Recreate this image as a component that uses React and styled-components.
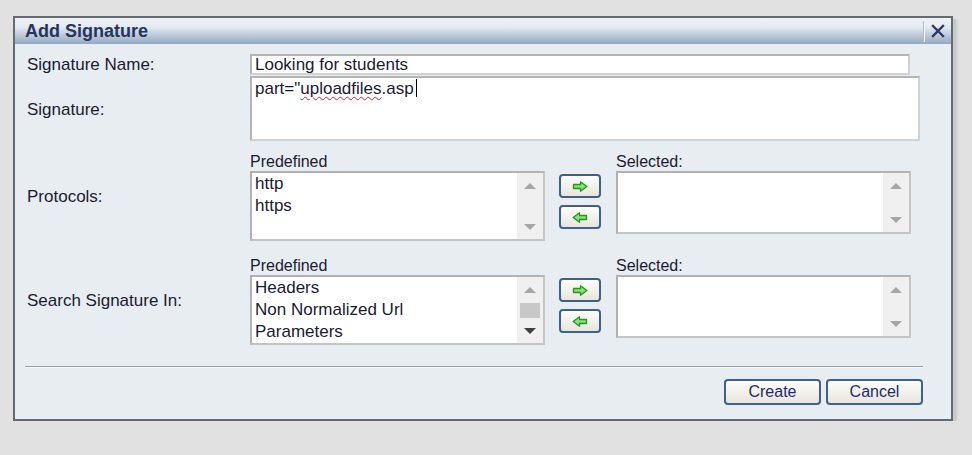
import React from 'react'
import styled, { createGlobalStyle } from 'styled-components';

const Global = createGlobalStyle`
  body {
    margin: 0;
    background: #e1e1e1;
    font-family: "Liberation Sans", Arial, sans-serif;
  }
`;

function ArrowIcon({ dir }) {
  const flip = dir === 'left' ? 'scale(-1,1) translate(-16,0)' : undefined;
  return (
    <svg width="16" height="11" viewBox="0 0 16 11">
      <g transform={flip}>
        <path d="M1.5 3.5 H8.5 V0.8 L14.8 5.5 L8.5 10.2 V7.5 H1.5 Z"
          fill="#8fdc7a" stroke="#1f9a1f" strokeWidth="1.3" strokeLinejoin="round" />
      </g>
    </svg>
  );
}

function CloseIcon() {
  return (
    <svg width="14" height="14" viewBox="0 0 14 14">
      <path d="M2 2 L12 12 M12 2 L2 12" stroke="#2e3a66" strokeWidth="2.4" strokeLinecap="square" />
    </svg>
  );
}

function ListBox({ items, height, thumb, activeDown }) {
  return (
    <List $h={height}>
      <Items>
        {items.map((it) => <Item key={it}>{it}</Item>)}
      </Items>
      <Scroll>
        <Tri $up />
        {thumb && <Thumb />}
        <Tri $active={activeDown} />
      </Scroll>
    </List>
  );
}

function Picker({ items, thumb }) {
  return (
    <PickRow>
      <PickCol>
        <SmallLabel>Predefined</SmallLabel>
        <ListBox items={items} height={70} thumb={thumb} activeDown={thumb} />
      </PickCol>
      <Moves>
        <MoveBtn><ArrowIcon dir="right" /></MoveBtn>
        <MoveBtn><ArrowIcon dir="left" /></MoveBtn>
      </Moves>
      <PickCol>
        <SmallLabel>Selected:</SmallLabel>
        <ListBox items={[]} height={63} />
      </PickCol>
    </PickRow>
  );
}

export default function App() {
  return (
    <>
      <Global />
      <Dialog>
        <TitleBar>
          <Title>Add Signature</Title>
          <Close><CloseIcon /></Close>
        </TitleBar>
        <Body>
          <Form>
            <Label>Signature Name:</Label>
            <TextInput>Looking for students</TextInput>

            <Label $shift={2}>Signature:</Label>
            <TextArea>
              part="<Misspelled>uploadfiles</Misspelled>.asp<Caret />
            </TextArea>

            <Label $top={10}>Protocols:</Label>
            <Block $top={10}>
              <Picker items={['http', 'https']} />
            </Block>

            <Label $top={14}>Search Signature In:</Label>
            <Block $top={14}>
              <Picker items={['Headers', 'Non Normalized Url', 'Parameters']} thumb />
            </Block>
          </Form>
          <Rule />
          <Footer>
            <Button>Create</Button>
            <Button>Cancel</Button>
          </Footer>
        </Body>
      </Dialog>
    </>
  )
}

const Dialog = styled.div`
  margin: 16px 0 0 13px;
  width: 936px;
  border: 2px solid #646a72;
  background: #e8edf2;
  box-shadow: 3px 3px 0 #c9c9c9, 5px 4px 2px #d2d2d2;
  color: #1b1b30;
`;

const TitleBar = styled.div`
  display: flex;
  align-items: center;
  height: 26px;
  background: linear-gradient(to bottom, #eef2f6 0%, #e3eaf1 35%, #b7c6d7 70%, #93a9c3 100%);
`;

const Title = styled.div`
  flex: 1;
  padding-left: 10px;
  font-size: 18px;
  font-weight: bold;
  color: #26345e;
`;

const Close = styled.div`
  display: flex;
  align-items: center;
  justify-content: center;
  width: 27px;
  height: 21px;
  border-left: 1px solid #b3bfcc;
  box-shadow: inset 1px 0 0 #f3f6f9;
`;

const Body = styled.div`
  padding: 10px 28px 14px 12px;
`;

const Form = styled.div`
  display: grid;
  grid-template-columns: 223px 1fr;
  row-gap: 1px;
  align-items: center;
`;

const Label = styled.div`
  font-size: 17px;
  margin-top: ${(p) => p.$top || 0}px;
  padding-top: ${(p) => p.$shift || 0}px;
`;

const Block = styled.div`
  margin-top: ${(p) => p.$top || 0}px;
`;

const Field = styled.div`
  box-sizing: border-box;
  background: #fff;
  border: 2px solid #b4b4b4;
  border-right-color: #d2d2d2;
  border-bottom-color: #d2d2d2;
  font-size: 17px;
  padding-left: 3px;
`;

const TextInput = styled(Field)`
  width: 660px;
  height: 21px;
  line-height: 17px;
`;

const TextArea = styled(Field)`
  width: 670px;
  height: 65px;
  line-height: 22px;
  padding-top: 0;
`;

const Misspelled = styled.span`
  text-decoration: underline wavy #e02020;
  text-decoration-thickness: 1px;
  text-underline-offset: 2px;
`;

const Caret = styled.span`
  display: inline-block;
  width: 1px;
  height: 18px;
  margin-left: 2px;
  vertical-align: -3px;
  background: #000;
`;

const PickRow = styled.div`
  display: flex;
  align-items: flex-start;
`;

const PickCol = styled.div`
  display: flex;
  flex-direction: column;
`;

const SmallLabel = styled.div`
  font-size: 16px;
  line-height: 19px;
`;

const Moves = styled.div`
  display: flex;
  flex-direction: column;
  gap: 7px;
  padding: 22px 15px 0 14px;
`;

const MoveBtn = styled.div`
  box-sizing: border-box;
  width: 42px;
  height: 24px;
  display: flex;
  align-items: center;
  justify-content: center;
  border: 2px solid #3f6189;
  border-radius: 4px;
  background: linear-gradient(to bottom, #fdfdfb, #e7e5dc);
`;

const List = styled.div`
  box-sizing: border-box;
  display: flex;
  width: 295px;
  height: ${(p) => p.$h}px;
  background: #fff;
  border: 2px solid #b2b2b2;
  border-right-color: #c4c4c4;
  border-bottom-color: #c4c4c4;
`;

const Items = styled.div`
  flex: 1;
  padding-left: 3px;
  font-size: 17px;
  line-height: 22px;
`;

const Item = styled.div``;

const Scroll = styled.div`
  width: 26px;
  background: #f0f0f0;
  display: flex;
  flex-direction: column;
  align-items: center;
  justify-content: space-between;
  padding: 10px 0 9px;
  box-sizing: border-box;
`;

const Tri = styled.div`
  width: 0;
  height: 0;
  border-left: 6px solid transparent;
  border-right: 6px solid transparent;
  ${(p) => p.$up
    ? `border-bottom: 6px solid #a6a6a6;`
    : `border-top: 6px solid ${p.$active ? '#404040' : '#a6a6a6'};`}
`;

const Thumb = styled.div`
  width: 20px;
  height: 15px;
  background: #c8c8c8;
`;

const Rule = styled.div`
  margin: 21px 0 0 -2px;
  height: 1px;
  background: #9a9ea4;
  border-bottom: 1px solid #f4f6f8;
`;

const Footer = styled.div`
  display: flex;
  justify-content: flex-end;
  gap: 5px;
  margin-top: 11px;
`;

const Button = styled.div`
  box-sizing: border-box;
  width: 97px;
  height: 26px;
  display: flex;
  align-items: center;
  justify-content: center;
  border: 2px solid #3f6189;
  border-radius: 4px;
  background: linear-gradient(to bottom, #fdfdfb, #e7e5dc);
  font-size: 16px;
  color: #1e2a70;
`;
